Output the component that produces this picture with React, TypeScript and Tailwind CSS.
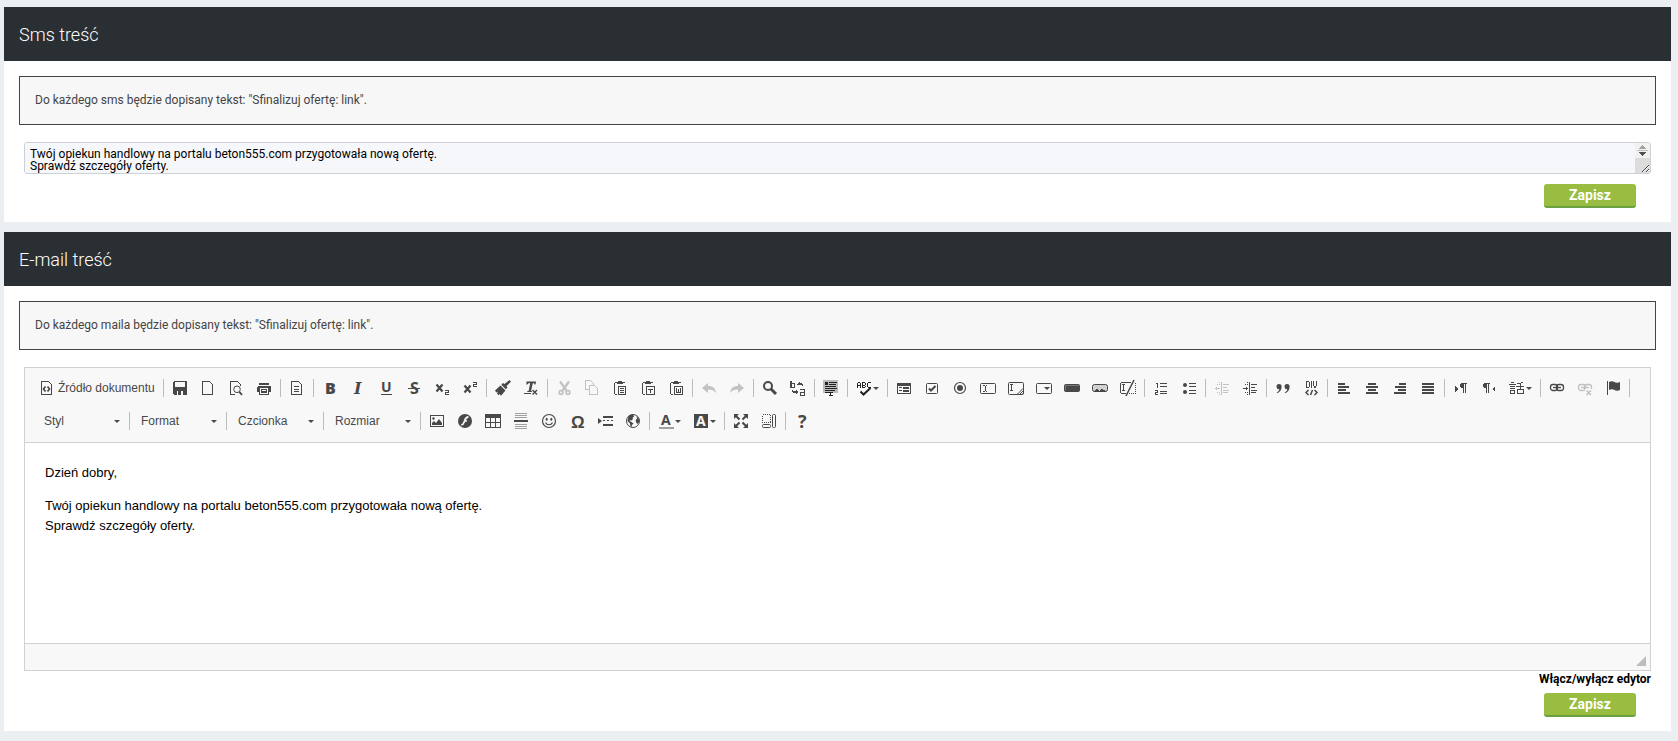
import { Fragment, useState } from 'react'
import type { ReactNode } from 'react'

type Tool = { label: string; icon: ReactNode; disabled?: boolean; menu?: boolean }

const sans = "'Liberation Sans', sans-serif"
const humanist = "'Open Sans', sans-serif"

// stroke-only helpers shared by the toolbar drawings
const line = { fill: 'none', stroke: 'currentColor' }
const smooth = { shapeRendering: 'geometricPrecision' as const }
const page = <path d="M2.5 1.5h7l3 3v10h-10z" {...line} />
const clipboard = (
  <>
    <path d="M5 2.5H3.5l-1 1v10l1 1H5M11 2.5h1.5" {...line} />
    <path d="M5 4V2h1V1h4v1h1v2z" />
  </>
)
const chain = (
  <g {...smooth} {...line} strokeWidth="1.3">
    <rect x="1.500" y="4.500" width="7" height="6" rx="2.500" />
    <rect x="7.500" y="4.500" width="7" height="6" rx="2.500" />
    <path d="M4 7.500h8" />
  </g>
)
const caretBeam = <path d="M3 5.500h1.500M5.500 5.500H7M3 11.500h1.500M5.500 11.500H7M5 6v5" {...line} />

const groups: Tool[][] = [
  [
    { label: 'Zapisz', icon: <path fillRule="evenodd" d="M1 2l1-1h12l1 1v12l-1 1H2l-1-1zM3 2v5h10V2zM5 11v4h1v-4zM9 11v4h2v-4z" /> },
    { label: 'Nowa strona', icon: page },
    {
      label: 'Podgląd',
      icon: (
        <>
          <path d="M7 14.500H2.500v-13h7l3 3V6" {...line} />
          <g {...smooth} {...line}>
            <circle cx="9" cy="9.300" r="3.300" />
            <path d="M11.300 11.800l2.700 3" strokeWidth="1.800" />
          </g>
        </>
      ),
    },
    { label: 'Drukuj', icon: <path fillRule="evenodd" d="M3 3h10v2H3zM1 7l1-1h12l1 1v5h-2v3H3v-3H1zM4 8v6h8V8zM5 9h6v4H5zM6 10v1h4v-1z" /> },
  ],
  [{ label: 'Szablony', icon: <>{page}<path d="M5 6.500h5M5 9.500h5M5 11.500h5" {...line} /></> }],
  [
    { label: 'Pogrubienie', icon: <text x="3" y="14" fontSize="16" fontWeight="800" fontFamily={humanist}>B</text> },
    { label: 'Kursywa', icon: <text x="4" y="14" fontSize="16" fontWeight="700" fontStyle="italic" fontFamily="'DejaVu Serif', serif">I</text> },
    { label: 'Podkreślenie', icon: <><text x="3" y="12" fontSize="14" fontWeight="700" fontFamily={humanist}>U</text><path d="M3 14h11v1H3z" /></> },
    { label: 'Przekreślenie', icon: <><text x="4" y="14" fontSize="16" fontWeight="700" fontFamily={humanist}>S</text><path d="M2 8h12v1H2z" /></> },
    {
      label: 'Indeks dolny',
      icon: (
        <>
          <path d="M2.500 4.500l6 7M8.500 4.500l-6 7" {...line} {...smooth} strokeWidth="2.200" />
          <path d="M11 10.500h3.500v2h-3v2H15" {...line} />
        </>
      ),
    },
    {
      label: 'Indeks górny',
      icon: (
        <>
          <path d="M2.500 5.500l6 7M8.500 5.500l-6 7" {...line} {...smooth} strokeWidth="2.200" />
          <path d="M11 2.500h3.500v2h-3v2H15" {...line} />
        </>
      ),
    },
  ],
  [
    { label: 'Kopiuj formatowanie', icon: <path {...smooth} d="M14.500 0L16 1.500l-4.500 4.700 1 1.300-1.700 1.700-4.500-4.500L8 3l1.500 1zM5.500 5.500l5 5-4.500 5.300L4.500 14l-1 1.300L2 13.500l1-2-1.700 1L0 10.500z" /> },
    {
      label: 'Usuń formatowanie',
      icon: (
        <>
          <path {...smooth} d="M3.500 1.500h9.500l-.5 3h-1L11 3.200H9.800L8 11h1l-.2 1H4.200l.2-1h1.200L7.200 3.200H5.500L4.300 4.500h-1z" />
          <path d="M1 13h7v1H1z" />
          <path d="M9.500 10l4.500 4.500M14 10l-4.500 4.500" {...line} {...smooth} strokeWidth="1.400" />
        </>
      ),
    },
  ],
  [
    {
      label: 'Wytnij',
      disabled: true,
      icon: (
        <g {...smooth} {...line}>
          <path d="M4 1.500l6.500 9M13 1.500l-6.500 9" strokeWidth="2.200" />
          <circle cx="5" cy="12.500" r="1.900" strokeWidth="1.700" />
          <circle cx="12" cy="12.500" r="1.900" strokeWidth="1.700" />
        </g>
      ),
    },
    { label: 'Kopiuj', disabled: true, icon: <path d="M5 9.500H1.500v-9h5l3 3V5M5.500 5.500h5l3 3v6h-8z" {...line} /> },
    { label: 'Wklej', icon: <>{clipboard}<path d="M6.500 6.500h7v8h-7zM8 8.500h4M8 10.500h4M8 12.500h4" {...line} /></> },
    { label: 'Wklej jako czysty tekst', icon: <>{clipboard}<path d="M6.500 6.500h8v8h-8zM8 9.500h5M10.500 9v4" {...line} /></> },
    { label: 'Wklej z programu Word', icon: <>{clipboard}<path d="M6.500 6.500h8v8h-8zM8.500 8v4.500h4V8M10.500 9v3" {...line} /></> },
  ],
  [
    { label: 'Cofnij', disabled: true, icon: <path {...smooth} d="M1 8l6-5v3c5 0 7.500 2.500 8 7-2-2.500-4-3.500-8-3.500V13z" /> },
    { label: 'Ponów', disabled: true, icon: <path {...smooth} d="M15 8L9 3v3c-5 0-7.500 2.500-8 7 2-2.500 4-3.500 8-3.500V13z" /> },
  ],
  [
    {
      label: 'Znajdź',
      icon: (
        <g {...smooth} {...line}>
          <circle cx="6" cy="6" r="4" strokeWidth="2" />
          <path d="M9 9l5 5" strokeWidth="3" />
        </g>
      ),
    },
    {
      label: 'Zamień',
      icon: (
        <>
          <path d="M1 1v7M1.500 4v3.500h3v-4h-3M10 9.500h4.500V15.500h-4v-3H14" {...line} strokeWidth="1.500" />
          <path d="M7 4l3-2v1h2v1h1v2h-1V5H7zM9 12l-3-2v1H3v-1H2v2h1v1h3v1z" />
        </>
      ),
    },
  ],
  [
    {
      label: 'Zaznacz wszystko',
      icon: (
        <>
          <path d="M0 0h15v13H0z" fill="#bcbcbc" />
          <path d="M2 2h3v3H2zM6 2h8v1H6zM6 4h7v1H6zM2 6h11v1H2zM2 8h12v1H2zM2 10h10v1H2zM2 12h4v1H2zM6 12h4v1H8v2h2v1H6v-1h1v-2H6z" fill="#222" />
        </>
      ),
    },
  ],
  [
    {
      label: 'Sprawdź pisownię podczas pisania',
      menu: true,
      icon: (
        <g stroke="#222" fill="none">
          <path d="M1.500 8V3.500l1-1h1l1 1V8M2 5.500h2M6.500 8V2.500h2l1 1v1l-1 1H7M8.500 5.500l1 1-1 1H6M14.500 2.500h-2l-1 1v3l1 1h2" />
          <path d="M4.500 11.500l3 3L14.500 8" strokeWidth="2" {...smooth} />
        </g>
      ),
    },
  ],
  [
    { label: 'Formularz', icon: <path fillRule="evenodd" d="M1 3h14v11H1zM2 6v7h12V6zM3 7h3v1H3zM3 10h3v1H3zM7 7h6v2H7zM7 10h6v2H7z" /> },
    {
      label: 'Pole wyboru (checkbox)',
      icon: (
        <>
          <rect x="2.500" y="3.500" width="11" height="10" rx="1" {...line} {...smooth} />
          <path d="M5 8.500l2 2 4.500-4.500" {...line} {...smooth} strokeWidth="2" />
        </>
      ),
    },
    {
      label: 'Przycisk opcji (radio)',
      icon: (
        <g {...smooth}>
          <circle cx="8" cy="8" r="5.500" {...line} strokeWidth="1.200" />
          <circle cx="8" cy="8" r="3" />
        </g>
      ),
    },
    { label: 'Pole tekstowe', icon: <><rect x=".5" y="3.500" width="15" height="10" rx="1" {...line} {...smooth} />{caretBeam}</> },
    {
      label: 'Obszar tekstowy',
      icon: (
        <>
          <rect x=".5" y="2.500" width="15" height="12" rx="1" {...line} {...smooth} />
          <path d="M2 4.500h3M2 10.500h3M3.500 5v5" {...line} />
          <path d="M9 14.500l6-6M11.500 14.500l3.500-3.500M13.500 15l2-2" {...line} {...smooth} />
        </>
      ),
    },
    { label: 'Lista wyboru', icon: <><rect x=".5" y="3.500" width="15" height="10" rx="1" {...line} {...smooth} /><path d="M8 7h6l-3 3z" {...smooth} /></> },
    { label: 'Przycisk', icon: <><rect x="0" y="4" width="16" height="8" rx="2" {...smooth} /><path d="M1.500 10V5.500h13" fill="none" stroke="#777" /></> },
    {
      label: 'Przycisk graficzny',
      icon: (
        <>
          <rect x=".5" y="4.500" width="15" height="7" rx="2" fill="#d0d0d0" stroke="currentColor" {...smooth} />
          <path d="M2 12v-1h1v-1h1V9h2v1h1v1h1v-1h1V9h2v1h2v1h1v1z" />
        </>
      ),
    },
    {
      label: 'Pole ukryte',
      icon: (
        <>
          <path d="M11 2.500H1.500l-1 1v9l1 1H6M2 4.500h3M2 10.500h3M3.500 5v5" {...line} />
          <path d="M15.500 3v10M9 13.500h7" {...line} strokeDasharray="1 1" />
          <path d="M14 0L6 16" {...line} {...smooth} strokeWidth="1.600" />
        </>
      ),
    },
  ],
  [
    { label: 'Lista numerowana', icon: <path d="M3 3.500h1.500V8M2 10.500h2.500v2h-2v2H5M7 3.500h7M7 6.500h7M7 11.500h7M7 13.500h7" {...line} /> },
    {
      label: 'Lista wypunktowana',
      icon: (
        <>
          <path d="M8 3.500h7M8 6.500h7M8 10.500h7M8 13.500h7" {...line} />
          <circle cx="4" cy="5" r="2" {...smooth} />
          <circle cx="4" cy="12" r="2" {...smooth} />
        </>
      ),
    },
  ],
  [
    {
      label: 'Zmniejsz wcięcie',
      disabled: true,
      icon: <path d="M7.500 2v13M9 4.500h6M9 7.500h4M9 10.500h6M9 12.500h5M1 8.500h5M2.500 7v3M3 4.500h1M5 4.500h1M3 12.500h1M5 12.500h1M5.500 2v1M5.500 14v1" {...line} />,
    },
    {
      label: 'Zwiększ wcięcie',
      icon: <path d="M7.500 2v13M9 4.500h6M9 7.500h4M9 10.500h6M9 12.500h5M1 8.500h5M4.500 7v3M3 4.500h1M5 4.500h1M3 12.500h1M5 12.500h1M5.500 2v1M5.500 14v1" {...line} />,
    },
  ],
  [
    {
      label: 'Cytat',
      icon: <path {...smooth} d="M4 4a2.600 2.600 0 0 1 2.600 2.800C6.600 10 5 12.300 2 13.300l-.3-.9C3.500 11.500 4.200 10.500 4.200 9.200A2.600 2.600 0 0 1 4 4zM12 4a2.600 2.600 0 0 1 2.600 2.800c0 3.200-1.600 5.500-4.600 6.500l-.3-.9c1.800-.9 2.500-1.900 2.500-3.200A2.600 2.600 0 0 1 12 4z" />,
    },
    {
      label: 'Utwórz pojemnik DIV',
      icon: (
        <g {...line}>
          <path d="M3.500 1v6.500h2l1-1v-4l-1-1H3M8.500 1v7M10.500 1v4l1 2.500h1l1-2.500V1" />
          <path d="M5.500 10L3 12.500 5.500 15M11.500 10l2.500 2.500-2.500 2.500M9.500 10l-2 5" {...smooth} strokeWidth="1.500" />
        </g>
      ),
    },
  ],
  [
    { label: 'Wyrównaj do lewej', icon: <path d="M2 3h7v2H2zM2 6h11v2H2zM2 9h8v2H2zM2 12h12v2H2z" /> },
    { label: 'Wyśrodkuj', icon: <path d="M4 3h8v2H4zM2 6h12v2H2zM4 9h8v2H4zM2 12h12v2H2z" /> },
    { label: 'Wyrównaj do prawej', icon: <path d="M7 3h7v2H7zM3 6h11v2H3zM6 9h8v2H6zM2 12h12v2H2z" /> },
    { label: 'Wyjustuj', icon: <path d="M2 3h12v2H2zM2 6h12v2H2zM2 9h12v2H2zM2 12h12v2H2z" /> },
  ],
  [
    { label: 'Kierunek tekstu od lewej do prawej', icon: <path d="M2 6l3 3-3 3zM7 4l1-1h6v1h-1v9h-1V4h-1v9h-1V8H8L7 7z" /> },
    { label: 'Kierunek tekstu od prawej do lewej', icon: <path d="M14 6l-3 3 3 3zM2 4l1-1h6v1H8v9H7V4H6v9H5V8H3L2 7z" /> },
    {
      label: 'Ustaw język',
      menu: true,
      icon: <path d="M2 2.500h3M0 4.500h7M1 6.500h5M1 8.500h5M1.500 10.500h4v3h-4zM8 3.500h3L14 2M11.500 3v7M7 6.500h8M8.500 9.500h6v4h-6z" {...line} />,
    },
  ],
  [
    { label: 'Wstaw/edytuj odnośnik', icon: chain },
    { label: 'Usuń odnośnik', disabled: true, icon: <>{chain}<path d="M8 9h7v6H8z" fill="#f8f8f8" /><path d="M9.500 10.500l4.500 4.500M14 10.500L9.500 15" {...line} {...smooth} strokeWidth="1.600" /></> },
    { label: 'Wstaw/edytuj kotwicę', icon: <><path d="M2 1h1v14H2z" /><path {...smooth} d="M4 2c2-1.300 4-1 5.500 0s3.500 1 5.500 0v8c-2 1-4 1-5.500 0S6 9 4 10z" /></> },
  ],
]

const lowerGroups: Tool[][] = [
  [
    {
      label: 'Obrazek',
      icon: (
        <>
          <rect x="1.500" y="2.500" width="13" height="11" {...line} />
          <path d="M3 12v-2l2-2 2 2 3-4 3 4v2z" {...smooth} />
          <circle cx="4.500" cy="5.500" r="1.200" {...smooth} />
        </>
      ),
    },
    {
      label: 'Flash',
      icon: (
        <g {...smooth}>
          <circle cx="8" cy="8" r="7" />
          <path d="M11.500 3.800C8 4 8 7 7.200 9c-.6 1.800-1.400 2.800-3 3M7.500 8H10" fill="none" stroke="#f8f8f8" strokeWidth="1.700" />
        </g>
      ),
    },
    { label: 'Tabela', icon: <path fillRule="evenodd" d="M0 1h16v14H0zM1 5v4h4V5zM6 5v4h4V5zM11 5v4h4V5zM1 10v4h4v-4zM6 10v4h4v-4zM11 10v4h4v-4z" /> },
    { label: 'Wstaw poziomą linię', icon: <><path d="M2 .5h12M2 2.500h12M2 4.500h12M2 11.500h12M2 13.500h12M2 15.500h12" fill="none" stroke="#a0a0a0" /><path d="M1 7h14v2H1z" /></> },
    {
      label: 'Emotikona',
      icon: (
        <g {...smooth}>
          <circle cx="8" cy="8" r="6.500" {...line} strokeWidth="1.200" />
          <ellipse cx="5.700" cy="6.200" rx="1" ry="1.500" />
          <ellipse cx="10.300" cy="6.200" rx="1" ry="1.500" />
          <path d="M4.500 9.500c1.300 3 5.700 3 7 0" {...line} strokeWidth="1.200" />
        </g>
      ),
    },
    { label: 'Wstaw znak specjalny', icon: <text x="2" y="15" fontSize="17" fontWeight="700" fontFamily={sans}>Ω</text> },
    { label: 'Wstaw podział strony', icon: <><path d="M1 5l4 3-4 3z" {...smooth} /><path d="M6 3h10v2H6zM6 11h10v2H6zM6 7h2v1H6zM10 7h2v1h-2zM14 7h2v1h-2z" /></> },
    {
      label: 'IFrame',
      icon: (
        <g {...smooth}>
          <circle cx="8" cy="8" r="6.500" {...line} />
          <path d="M3.500 3C5 1.500 7 1.500 8.500 2L9 3.500 7.500 5l.5 1L6.500 7.500 5 7.300 4.500 8l2 1 2 1.500L7 12l-.5 2-1-.5-.5-3L2.500 8zM11.500 3l2.500 3 .3 2.500-1.300 2.500-1.500-1-.8-2L11 6.500l1-.5z" />
        </g>
      ),
    },
  ],
  [
    { label: 'Kolor tekstu', menu: true, icon: <><text x="3" y="12" fontSize="14" fontWeight="700" fontFamily={humanist}>A</text><path d="M1 14h15v2H1z" fill="#a0a0a0" /></> },
    { label: 'Kolor tła', menu: true, icon: <><rect x="1" y="1" width="14" height="14" rx="1" /><text x="3" y="13" fontSize="14" fontWeight="700" fontFamily={humanist} fill="#f8f8f8">A</text></> },
  ],
  [
    {
      label: 'Maksymalizuj',
      icon: (
        <>
          <path d="M1 1h5L1 6zM15 1v5l-5-5zM1 15v-5l5 5zM15 15h-5l5-5z" {...smooth} />
          <path d="M3 3l3.500 3.500M13 3L9.500 6.500M3 13l3.500-3.500M13 13L9.500 9.500" {...line} {...smooth} strokeWidth="2" />
        </>
      ),
    },
    {
      label: 'Pokaż bloki',
      icon: (
        <>
          <rect x="1.500" y="1.500" width="8" height="8" {...line} strokeDasharray="1 1" />
          <rect x="11.500" y="1.500" width="3" height="13" rx="1" {...line} {...smooth} />
          <rect x="1.500" y="11.500" width="8" height="3" rx="1" {...line} {...smooth} />
        </>
      ),
    },
  ],
  [{ label: 'O CKEditor', icon: <text x="4" y="15" fontSize="18" fontWeight="700" fontFamily={humanist}>?</text> }],
]

const combos = ['Styl', 'Format', 'Czcionka', 'Rozmiar']

function Icon({ children }: { children: ReactNode }) {
  return (
    <svg viewBox="0 0 16 16" className="w-4 h-4 shrink-0 overflow-visible" fill="currentColor" shapeRendering="crispEdges" aria-hidden="true">
      {children}
    </svg>
  )
}

function Caret() {
  return (
    <svg viewBox="0 0 6 3" className="w-[6px] h-[3px] shrink-0" fill="currentColor" aria-hidden="true">
      <path d="M0 0h6L3 3z" />
    </svg>
  )
}

function Separator() {
  return <span className="w-px h-[18px] mx-[2px] bg-[#bcbcbc]" />
}

function ToolButton({ tool }: { tool: Tool }) {
  return (
    <button
      type="button"
      aria-label={tool.label}
      disabled={tool.disabled}
      className="flex items-center gap-px h-7 px-[6px] hover:bg-[#e5e5e5] disabled:opacity-30"
    >
      <Icon>{tool.icon}</Icon>
      {tool.menu && <Caret />}
    </button>
  )
}

function Combo({ name }: { name: string }) {
  return (
    <div className="relative w-[92px] h-7">
      <select
        aria-label={name}
        className="w-full h-full pl-[9px] pr-4 appearance-none bg-transparent text-xs font-['Liberation_Sans',sans-serif]"
      >
        <option>{name}</option>
      </select>
      <span className="absolute inset-y-0 right-[7px] flex items-center pointer-events-none">
        <Caret />
      </span>
    </div>
  )
}

function Panel({ title, info, children }: { title: string; info: string; children: ReactNode }) {
  return (
    <section className="bg-white">
      <h2 className="px-[15px] pt-4 pb-[14px] bg-[#2a2f33] text-white text-lg leading-6 font-light">{title}</h2>
      <div className="px-[15px] pt-[15px] pb-[14px]">
        <p className="mb-[17px] p-[15px] border border-[#444] bg-[#f7f7f7] text-xs leading-[17px] text-[#444]">{info}</p>
        <div className="px-[5px]">{children}</div>
      </div>
    </section>
  )
}

function SaveButton() {
  return (
    <div className="flex justify-end pr-[15px]">
      <button
        type="submit"
        className="w-[92px] h-6 rounded-[3px] border-b-2 border-[#6aa03f] bg-[#98bd40] text-white text-sm leading-5 font-bold"
      >
        Zapisz
      </button>
    </div>
  )
}

function SmsForm() {
  const [sms, setSms] = useState(
    'Twój opiekun handlowy na portalu beton555.com przygotowała nową ofertę.\nSprawdź szczegóły oferty.'
  )

  return (
    <form onSubmit={(e) => e.preventDefault()}>
      <div className="relative mb-[10px]">
        <textarea
          aria-label="Sms treść"
          value={sms}
          onChange={(e) => setSms(e.target.value)}
          className="block w-full h-8 p-[5px] pr-5 rounded-[3px] border border-[#ccd1d6] bg-[#f5f7fb] text-xs leading-3 text-black resize-none"
        />
        {/* scroll arrows and resize grip */}
        <svg
          viewBox="0 0 15 30"
          className="absolute right-px top-px w-[15px] h-[30px] pointer-events-none"
          shapeRendering="crispEdges"
          aria-hidden="true"
        >
          <path d="M0 0h15v15H0z" fill="#f1f1f1" />
          <path d="M0 15h15v15H0z" fill="#dcdcdc" />
          <path d="M7 2h1v1h1v1h1v1h1v1H4V5h1V4h1V3h1z" fill="#a3a3a3" />
          <path d="M2 7h11v1H2z" fill="#c1c1c1" />
          <path d="M4 9h7v1h-1v1H9v1H8v1H7v-1H6v-1H5v-1H4z" fill="#505050" />
          <path d="M7 29l7-7M11 29l3-3" fill="none" stroke="#444" />
          <path d="M8 29l6-6M12 29l2-2" fill="none" stroke="#fff" />
        </svg>
      </div>
      <SaveButton />
    </form>
  )
}

function Editor() {
  return (
    <div className="border border-[#d1d1d1]">
      <div className="px-2 pt-[6px] pb-[2px] bg-[#f8f8f8] border-b border-[#d1d1d1] text-[#484848]">
        <div className="flex flex-wrap items-center mb-[5px]">
          <button
            type="button"
            className="flex items-center gap-[3px] h-7 px-[6px] text-xs font-['Liberation_Sans',sans-serif] hover:bg-[#e5e5e5]"
          >
            <Icon>
              {page}
              <path d="M6.500 6.500L4.500 9l2 2.500M8.500 6.500l2 2.500-2 2.500" {...line} {...smooth} strokeWidth="1.700" />
            </Icon>
            Źródło dokumentu
          </button>
          <Separator />
          {groups.map((group, i) => (
            <Fragment key={i}>
              {group.map((tool) => (
                <ToolButton key={tool.label} tool={tool} />
              ))}
              <Separator />
            </Fragment>
          ))}
        </div>
        <div className="flex flex-wrap items-center mb-[5px] pl-[2px]">
          {combos.map((name) => (
            <Fragment key={name}>
              <Combo name={name} />
              <Separator />
            </Fragment>
          ))}
          {lowerGroups.map((group, i) => (
            <Fragment key={i}>
              {i > 0 && <Separator />}
              {group.map((tool) => (
                <ToolButton key={tool.label} tool={tool} />
              ))}
            </Fragment>
          ))}
        </div>
      </div>

      <div
        contentEditable
        suppressContentEditableWarning
        role="textbox"
        aria-multiline="true"
        aria-label="E-mail treść"
        className="min-h-[200px] p-5 space-y-[13px] bg-white text-black text-[13px] leading-5 font-['Liberation_Sans',sans-serif] outline-none"
      >
        <p>Dzień dobry,</p>
        <p>
          Twój opiekun handlowy na portalu beton555.com przygotowała nową ofertę.
          <br />
          Sprawdź szczegóły oferty.
        </p>
      </div>

      <div className="flex justify-end items-end h-[27px] pr-1 pb-1 bg-[#f8f8f8] border-t border-[#d1d1d1]">
        <svg viewBox="0 0 10 10" className="w-[10px] h-[10px]" fill="#bcbcbc" aria-hidden="true">
          <path d="M10 0v10H0z" />
        </svg>
      </div>
    </div>
  )
}

export default function App() {
  return (
    <main className="min-h-screen pt-[7px] pb-[10px] pl-1 pr-[7px] space-y-[10px] bg-[#ebeff2] font-[Roboto,sans-serif]">
      <Panel title="Sms treść" info={'Do każdego sms będzie dopisany tekst: "Sfinalizuj ofertę: link".'}>
        <SmsForm />
      </Panel>

      <Panel title="E-mail treść" info={'Do każdego maila będzie dopisany tekst: "Sfinalizuj ofertę: link".'}>
        <form onSubmit={(e) => e.preventDefault()}>
          <Editor />
          <div className="flex justify-end mb-[6px]">
            <a href="#edytor" className="text-xs leading-4 font-bold text-black">Włącz/wyłącz edytor</a>
          </div>
          <SaveButton />
        </form>
      </Panel>
    </main>
  )
}
